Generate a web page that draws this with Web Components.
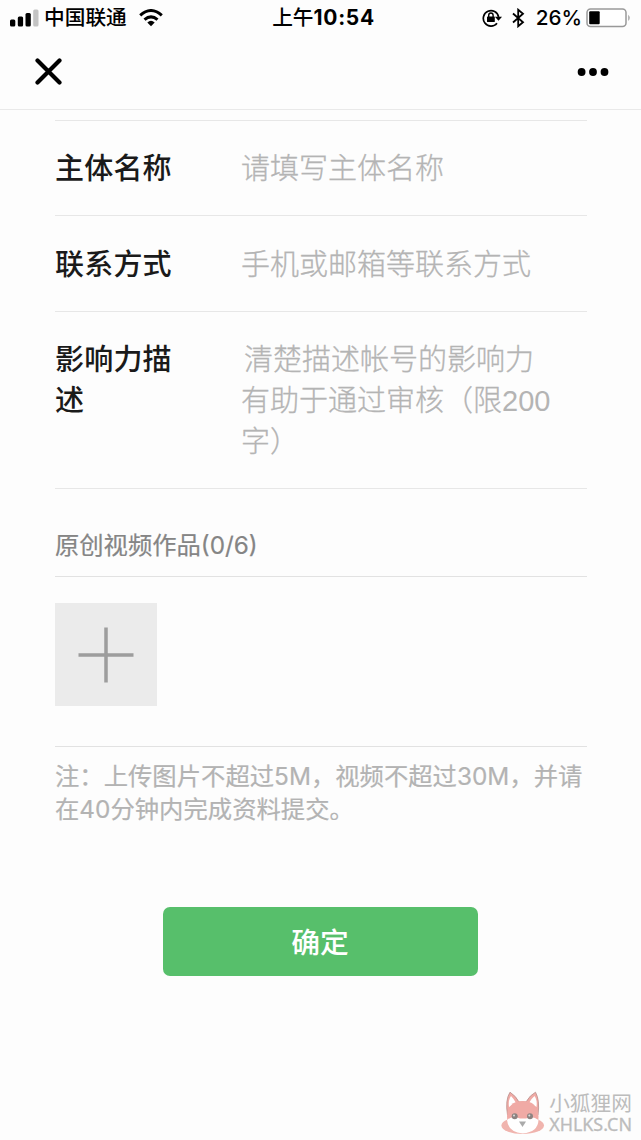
<!DOCTYPE html>
<html lang="zh-CN">
<head>
<meta charset="utf-8">
<title>资料提交</title>
<style>
  body {
    margin: 0;
    background: #fdfdfd;
    color: #1a1a1a;
    font-family: "Liberation Sans", "Noto Sans CJK SC", sans-serif;
  }
</style>
</head>
<body>
<app-screen>
  <status-bar slot="top"></status-bar>
  <title-bar slot="top"></title-bar>
  <form-row label="主体名称">请填写主体名称</form-row>
  <form-row label="联系方式">手机或邮箱等联系方式</form-row>
  <form-row label="影响力描述" tall><span style="margin-left:3px">清楚描述帐号的影响力</span><br>有助于通过审核（限<span style="-webkit-text-stroke:0">200</span><br>字）</form-row>
  <upload-section heading="原创视频作品(0/6)"></upload-section>
  <form-note>注：上传图片不超过5M，视频不超过30M，并请<br>在40分钟内完成资料提交。</form-note>
  <submit-button>确定</submit-button>
  <site-mark slot="bottom"></site-mark>
</app-screen>

<script>
class BaseElement extends HTMLElement {
  constructor() {
    super();
    const template = document.createElement('template');
    template.innerHTML = this.render();
    this.attachShadow({ mode: 'open' }).appendChild(template.content.cloneNode(true));
  }
}

class AppScreen extends BaseElement {
  render() {
    return `
    <style>
      :host {
        display: flex;
        flex-direction: column;
        width: 641px;
        height: 1140px;
        overflow: hidden;
      }

      main {
        flex: 1;
        display: flex;
        flex-direction: column;
        margin: 9.5px 54px 0 55px;
        border-top: 1px solid #e7e7e7;
      }
    </style>
    <slot name="top"></slot>
    <main><slot></slot></main>
    <slot name="bottom"></slot>
    `;
  }
}
customElements.define('app-screen', AppScreen);

class StatusBar extends BaseElement {
  render() {
    return `
    <style>
      :host {
        display: grid;
        grid-template-columns: 1fr auto 1fr;
        align-items: center;
        height: 35px;
        padding: 0 9px 0 10px;
        color: #000;
        font: 500 20.7px/35px Inter, "Noto Sans CJK SC", sans-serif;
        white-space: nowrap;
      }

      div {
        display: flex;
        align-items: center;
      }

      .time {
        margin-left: 5px;
      }

      .time b {
        font-size: 21px;
        font-weight: 700;
        letter-spacing: 0.7px;
      }

      .right {
        justify-content: flex-end;
      }

      svg {
        display: block;
        flex: none;
      }

      .wifi { margin-left: 12px; }
      .carrier { margin-left: 5px; }
      .bt { margin: 0 11px 0 10px; }
      .battery { margin-left: 4px; margin-right: 0; }
    </style>
    <div>
      <svg width="29" height="18" viewBox="0 0 29 18">
        <rect x="0" y="10.5" width="5.3" height="7" rx="1.5"/>
        <rect x="7.8" y="7.5" width="5.3" height="10" rx="1.5"/>
        <rect x="15.5" y="4" width="5.3" height="13.5" rx="1.5"/>
        <rect x="23.2" y="0.5" width="5.3" height="17" rx="1.5" fill="#c4c4c4"/>
      </svg>
      <span class="carrier">中国联通</span>
      <svg class="wifi" width="24" height="18" viewBox="0 0 24 18" fill="none" stroke="#000" stroke-width="3">
        <path d="M1.2 6.3Q12-3.2 22.8 6.3M5.5 10.7Q12 5 18.5 10.7"/>
        <path d="M8.3 13.4Q12 10.3 15.7 13.4L12 17.2Z" fill="#000" stroke="none"/>
      </svg>
    </div>
    <div class="time">上午<b>10:54</b></div>
    <div class="right">
      <svg width="20" height="20" viewBox="0 0 20 20" fill="none" stroke="#000" stroke-width="1.7">
        <path d="M15 15.2A7.7 7.7 0 1 1 16.6 9"/>
        <path d="M12.900 8.700H20L16.500 12.700Z" fill="#000" stroke="none"/>
        <rect x="5" y="8.500" width="7.800" height="5.500" rx=".6" fill="#000" stroke="none"/>
        <path d="M6.700 9V7.200a2.200 2.200 0 0 1 4.400 0V9" stroke-width="1.4"/>
      </svg>
      <svg class="bt" width="13" height="20" viewBox="0 0 13 20" fill="none" stroke="#000" stroke-width="1.8">
        <path d="M1 5.5 11 14.3 6.2 18.3V1.7L11 5.7 1 14.5"/>
      </svg>
      <span>26%</span>
      <svg class="battery" width="46" height="20" viewBox="0 0 46 20">
        <rect x="1" y="1" width="39" height="17.5" rx="3.5" fill="#fff" stroke="#999" stroke-width="1.5"/>
        <rect x="3.2" y="3.2" width="10.5" height="13" rx="1" fill="#000"/>
        <path d="M42.4 6.7Q44.8 9.8 42.4 13Z" fill="#8c8c8c"/>
      </svg>
    </div>
    `;
  }
}
customElements.define('status-bar', StatusBar);

class TitleBar extends BaseElement {
  render() {
    return `
    <style>
      :host {
        display: flex;
        justify-content: space-between;
        align-items: center;
        box-sizing: border-box;
        height: 75px;
        padding: 0 32px 1px 35px;
        border-bottom: 1px solid #e9e9e9;
      }
    </style>
    <svg width="27" height="27" viewBox="0 0 27 27" stroke="#000" stroke-width="4.2" stroke-linecap="round">
      <path d="M2.5 2.5 24.5 24.5M24.5 2.5 2.5 24.5"/>
    </svg>
    <svg width="32" height="8" viewBox="0 0 32 8">
      <circle cx="4.6" cy="4" r="3.9"/>
      <circle cx="16" cy="4" r="3.9"/>
      <circle cx="27.5" cy="4" r="3.9"/>
    </svg>
    `;
  }
}
customElements.define('title-bar', TitleBar);

class FormRow extends BaseElement {
  render() {
    return `
    <style>
      :host {
        display: grid;
        grid-template-columns: 186px 1fr;
        box-sizing: border-box;
        height: 95.5px;
        padding-top: 28.6px;
        border-bottom: 1px solid #e7e7e7;
        font-size: 29px;
        line-height: 41px;
        white-space: nowrap;
      }

      :host([tall]) {
        height: 177.5px;
      }

      label {
        width: 120px;
        font-weight: 500;
        letter-spacing: 0.2px;
        white-space: normal;
      }

      div {
        color: #b4b4b4;
        font-weight: 300;
        -webkit-text-stroke: 0.3px #b4b4b4;
      }
    </style>
    <label>${this.getAttribute('label')}</label>
    <div><slot></slot></div>
    `;
  }
}
customElements.define('form-row', FormRow);

class UploadSection extends BaseElement {
  render() {
    return `
    <style>
      :host {
        display: block;
        box-sizing: border-box;
        height: 258px;
        border-bottom: 1px solid #e2e2e2;
      }

      h2 {
        box-sizing: border-box;
        height: 88px;
        margin: 0 0 26px;
        padding-top: 40px;
        border-bottom: 1px solid #e2e2e2;
        color: #858585;
        font: 400 24.3px/33px Inter, "Noto Sans CJK SC", sans-serif;
        -webkit-text-stroke: 0.2px #858585;
      }

      .add {
        display: grid;
        place-items: center;
        width: 102px;
        height: 103px;
        background: #ebebeb;
      }
    </style>
    <h2>${this.getAttribute('heading')}</h2>
    <div class="add">
      <svg width="56" height="56" viewBox="0 0 56 56" stroke="#9d9d9d" stroke-width="3.5">
        <path d="M28 .5V55.5M.5 28H55.5"/>
      </svg>
    </div>
    `;
  }
}
customElements.define('upload-section', UploadSection);

class FormNote extends BaseElement {
  render() {
    return `
    <style>
      :host {
        display: block;
        padding-top: 13px;
        color: #b3b3b3;
        font: 400 24.35px/33px Inter, "Noto Sans CJK SC", sans-serif;
        -webkit-text-stroke: 0.2px #b3b3b3;
        white-space: nowrap;
      }
    </style>
    <slot></slot>
    `;
  }
}
customElements.define('form-note', FormNote);

class SubmitButton extends BaseElement {
  render() {
    return `
    <style>
      :host {
        display: block;
        align-self: center;
        margin: 81px 2px 0 0;
      }

      button {
        display: block;
        width: 315px;
        height: 69px;
        padding: 0 0 1px;
        border: 0;
        border-radius: 7px;
        background: #57bf6b;
        color: #fff;
        font: 500 28.8px/68px "Noto Sans CJK SC", sans-serif;
      }
    </style>
    <button><slot></slot></button>
    `;
  }
}
customElements.define('submit-button', SubmitButton);

class SiteMark extends BaseElement {
  render() {
    return `
    <style>
      :host {
        display: flex;
        align-self: flex-end;
        gap: 4px;
        height: 50px;
        padding-right: 9px;
        color: #bcbcbc;
        font-family: "Noto Sans CJK SC", sans-serif;
        white-space: nowrap;
      }

      .name {
        height: 24px;
        font-size: 20.7px;
        line-height: 24px;
      }

      .url {
        height: 20px;
        font: 400 17.9px/20px "Noto Sans", sans-serif;
        -webkit-text-stroke: 0.3px #bcbcbc;
      }
    </style>
    <svg width="44" height="46" viewBox="0 0 44 46">
      <ellipse cx="21.700" cy="35.500" rx="21.300" ry="8.500" fill="#f0b4ae"/>
      <path d="M6.500 25Q4 10 9 2.200Q15 6 18 12H25Q29 5 34.500 2.200Q39 10 37 25Z" fill="#f0aaa5" stroke="#b98f8b" stroke-width=".8"/>
      <path d="M8 17Q7 10 10 6Q13 9 15 13ZM35.500 17Q36.500 10 33.500 6Q30 9 28 13Z" fill="#fff"/>
      <path d="M6 26Q7 11 21.700 11T37.500 26Q38 42 21.700 43Q6 42 6 26Z" fill="#f0aaa5"/>
      <path d="M6 30Q11 25.500 19 28.500H25Q32 25.500 37.500 30Q37 42 21.700 43.500Q7 42 6 30Z" fill="#fff"/>
      <circle cx="13.700" cy="26.300" r="3" fill="#8c8381"/>
      <circle cx="29" cy="26.300" r="3" fill="#8c8381"/>
      <circle cx="13" cy="25.600" r="1" fill="#ddd"/>
      <circle cx="28.300" cy="25.600" r="1" fill="#ddd"/>
      <path d="M18 31.500H25L21.500 37Z" fill="#aaa"/>
    </svg>
    <div>
      <div class="name">小狐狸网</div>
      <div class="url">XHLKS.CN</div>
    </div>
    `;
  }
}
customElements.define('site-mark', SiteMark);
</script>
</body>
</html>
